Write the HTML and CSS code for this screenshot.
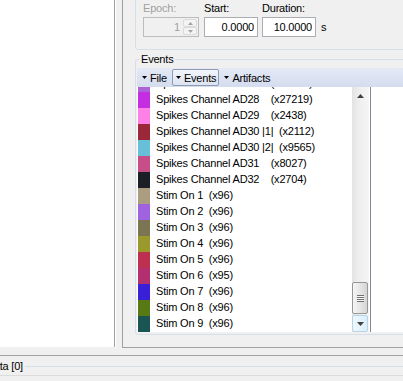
FILE: index.html
```html
<!DOCTYPE html>
<html lang="en">

<head>
    <meta charset="UTF-8">
    <meta name="viewport" content="width=device-width, initial-scale=1.0">
    <title>Events</title>
    <link rel="stylesheet" href="styles.css">
</head>

<body>
    <div class="workspace">
        <!-- Plot area (left) -->
        <div class="left-pane"></div>
        <div class="splitter"></div>

        <!-- Side panel -->
        <div class="right-pane">
            <div class="epoch-box">
                <div class="field epoch">
                    <label class="disabled">Epoch:</label>
                    <div class="spin">
                        <span class="spin-value">1</span>
                        <span class="spin-buttons">
                            <span class="spin-btn"><svg width="5" height="3" viewBox="0 0 5 3"><polygon points="2.5,0 5,3 0,3" fill="#a3a3a3"/></svg></span>
                            <span class="spin-btn"><svg width="5" height="3" viewBox="0 0 5 3"><polygon points="0,0 5,0 2.5,3" fill="#a3a3a3"/></svg></span>
                        </span>
                    </div>
                </div>
                <div class="field start">
                    <label>Start:</label>
                    <input class="num" type="text" value="0.0000" readonly>
                </div>
                <div class="field duration">
                    <label>Duration:</label>
                    <div class="with-unit">
                        <input class="num" type="text" value="10.0000" readonly>
                        <span class="unit">s</span>
                    </div>
                </div>
            </div>

            <fieldset class="events-box">
                <legend>Events</legend>
                <div class="toolbar">
                    <span class="tb-item file"><svg class="drop" width="5" height="3" viewBox="0 0 5 3"><polygon points="0,0 5,0 2.5,3"/></svg>File</span>
                    <span class="tb-item events checked"><svg class="drop" width="5" height="3" viewBox="0 0 5 3"><polygon points="0,0 5,0 2.5,3"/></svg>Events</span>
                    <span class="tb-item artifacts"><svg class="drop" width="5" height="3" viewBox="0 0 5 3"><polygon points="0,0 5,0 2.5,3"/></svg>Artifacts</span>
                </div>
                <div class="list-area">
                    <div class="rows">
                        <div class="rows-inner">
                            <div class="row"><span class="swatch" style="background:#ad62d6"></span><span class="label">Spikes Channel AD27    (x26318)</span></div>
                            <div class="row"><span class="swatch" style="background:#c42de0"></span><span class="label">Spikes Channel AD28    (x27219)</span></div>
                            <div class="row"><span class="swatch" style="background:#ff80e6"></span><span class="label">Spikes Channel AD29    (x2438)</span></div>
                            <div class="row"><span class="swatch" style="background:#9a2838"></span><span class="label">Spikes Channel AD30 |1|  (x2112)</span></div>
                            <div class="row"><span class="swatch" style="background:#66c0d8"></span><span class="label">Spikes Channel AD30 |2|  (x9565)</span></div>
                            <div class="row"><span class="swatch" style="background:#c84e88"></span><span class="label">Spikes Channel AD31    (x8027)</span></div>
                            <div class="row"><span class="swatch" style="background:#1b1f26"></span><span class="label">Spikes Channel AD32    (x2704)</span></div>
                            <div class="row"><span class="swatch" style="background:#ab9d7f"></span><span class="label">Stim On 1  (x96)</span></div>
                            <div class="row"><span class="swatch" style="background:#a063e0"></span><span class="label">Stim On 2  (x96)</span></div>
                            <div class="row"><span class="swatch" style="background:#7b7553"></span><span class="label">Stim On 3  (x96)</span></div>
                            <div class="row"><span class="swatch" style="background:#999a2b"></span><span class="label">Stim On 4  (x96)</span></div>
                            <div class="row"><span class="swatch" style="background:#bd3050"></span><span class="label">Stim On 5  (x96)</span></div>
                            <div class="row"><span class="swatch" style="background:#b32f6f"></span><span class="label">Stim On 6  (x95)</span></div>
                            <div class="row"><span class="swatch" style="background:#3a1fd9"></span><span class="label">Stim On 7  (x96)</span></div>
                            <div class="row"><span class="swatch" style="background:#587a14"></span><span class="label">Stim On 8  (x96)</span></div>
                            <div class="row"><span class="swatch" style="background:#1b5553"></span><span class="label">Stim On 9  (x96)</span></div>
                        </div>
                    </div>
                    <div class="scrollbar">
                        <div class="sb-btn up"><svg width="7" height="4" viewBox="0 0 7 4"><polygon points="3.5,0 7,4 0,4" fill="#404040"/></svg></div>
                        <div class="sb-track">
                            <div class="sb-thumb"><span class="grip"></span></div>
                        </div>
                        <div class="sb-btn down"><svg width="7" height="4" viewBox="0 0 7 4"><polygon points="0,0 7,0 3.5,4" fill="#404040"/></svg></div>
                    </div>
                    <div class="list-divider"></div>
                    <div class="list-rest"></div>
                </div>
            </fieldset>
        </div>
    </div>

    <!-- Data panel (bottom) -->
    <div class="status">
        <fieldset class="data-box">
            <legend>Data [0]</legend>
            <div class="data-grid"></div>
        </fieldset>
    </div>
</body>

</html>
```

FILE: styles.css
```css
/* Basic Reset */
* {
    margin: 0;
    padding: 0;
    box-sizing: border-box;
}

body {
    font-family: "Liberation Sans", Arial, sans-serif;
    font-size: 11px;
    letter-spacing: -0.2px;
    color: #000;
    background-color: #f0f0f0;
    width: 403px;
    height: 381px;
    overflow: hidden;
}

/* Main split layout */
.workspace {
    display: flex;
    height: 348px;
}

.left-pane {
    flex: none;
    width: 115px;
    height: 347px;
    background-color: #fff;
    border-right: 1px solid #a0a0a0;
}

.splitter {
    flex: none;
    width: 7px;
    border-left: 1px solid #fff;
}

.right-pane {
    flex: none;
    width: 300px;
    height: 348px;
    border-left: 1px solid #a0a0a0;
    border-bottom: 1px solid #a0a0a0;
}

/* Epoch / start / duration group */
.epoch-box {
    display: flex;
    align-items: flex-start;
    width: 300px;
    margin: -5px 0 0 12px;
    padding: 6px 0 12px 7px;
    border: 1px solid #d5dfe5;
    border-radius: 3px;
}

.field {
    display: flex;
    flex-direction: column;
}

.field label {
    line-height: 13px;
    margin-bottom: 2px;
}

.field label.disabled {
    color: #a0a0a0;
}

.field.epoch {
    width: 56px;
    margin-right: 5px;
}

.field.start {
    margin-right: 4px;
}

.spin {
    display: flex;
    height: 20px;
    border: 1px solid #bcbcbc;
    background-color: #f0f0f0;
}

.spin-value {
    flex: 1;
    text-align: right;
    padding-right: 3px;
    line-height: 18px;
    color: #a0a0a0;
}

.spin-buttons {
    width: 15px;
    display: flex;
    flex-direction: column;
    padding: 1px 1px 1px 0;
}

.spin-btn {
    flex: 1;
    display: flex;
    align-items: center;
    justify-content: center;
    border: 1px solid #dadada;
    border-radius: 2px;
    background-color: #f4f4f4;
}

input.num {
    width: 54px;
    height: 20px;
    border: 1px solid #abadb3;
    background-color: #fff;
    font: inherit;
    letter-spacing: inherit;
    color: #000;
    text-align: right;
    padding: 0 3px;
    outline: none;
}

.with-unit {
    display: flex;
    align-items: center;
}

.unit {
    margin-left: 5px;
}

/* Events group */
.events-box {
    width: 300px;
    margin: 3px 0 0 12px;
    padding: 2px 1px 2px 1px;
    border: 1px solid #d5dfe5;
    border-radius: 3px;
}

.events-box legend,
.data-box legend {
    margin-left: 2px;
    padding: 0 2px;
    line-height: 13px;
}

.toolbar {
    display: flex;
    align-items: center;
    height: 19px;
    padding-left: 1px;
    background: linear-gradient(to bottom, #e4e9f5, #d4dcef);
}

.tb-item {
    display: flex;
    align-items: center;
    gap: 3px;
    height: 17px;
    padding: 0 4px;
}

.tb-item .drop {
    fill: #000;
}

.tb-item.events {
    margin-left: 1px;
    padding: 0 2px 0 3px;
    border: 1px solid #8f9bb0;
    border-radius: 2px;
    background: linear-gradient(to bottom, #f2f5fb, #dce3f1);
}

.tb-item.artifacts {
    padding-left: 5px;
}

/* Event list */
.list-area {
    display: flex;
    height: 245px;
    background-color: #fff;
}

.rows {
    flex: none;
    width: 215px;
    overflow: hidden;
}

.rows-inner {
    margin-top: -11px;
}

.row {
    display: flex;
    align-items: flex-start;
    height: 16px;
    padding-left: 1px;
}

.swatch {
    flex: none;
    width: 12px;
    height: 16px;
    margin-right: 6px;
}

.label {
    white-space: pre;
    line-height: 15px;
}

.scrollbar {
    flex: none;
    width: 17px;
    display: flex;
    flex-direction: column;
    background: linear-gradient(to right, #e3e3e3, #eeeeee 40%, #f5f5f5);
}

.sb-btn {
    height: 17px;
    margin-right: 1px;
    display: flex;
    align-items: center;
    justify-content: center;
}

.sb-btn.down {
    border: 1px solid #b9d3e6;
    border-radius: 2px;
    background: linear-gradient(to right, #eef7fd, #dceffb);
}

.sb-track {
    flex: 1;
    display: flex;
    flex-direction: column;
    justify-content: flex-end;
    padding-bottom: 1px;
}

.sb-thumb {
    height: 32px;
    margin-right: 1px;
    border: 1px solid #979797;
    border-radius: 2px;
    background: linear-gradient(to right, #f5f5f5, #e6e6e6 50%, #d5d5d5);
    display: flex;
    align-items: center;
    justify-content: center;
}

.grip {
    width: 7px;
    height: 7px;
    background: repeating-linear-gradient(to bottom, #707070 0 1px, #f7f7f7 1px 2px);
}

.list-divider {
    flex: none;
    width: 2px;
    border-right: 1px solid #828790;
}

.list-rest {
    flex: 1;
}

/* Bottom data panel */
.status {
    margin-top: 7px;
    border-top: 1px solid #a0a0a0;
}

.data-box {
    width: 440px;
    margin: 4px 0 0 -20px;
    padding: 2px 1px 0 1px;
    border: 1px solid #d5dfe5;
    border-radius: 3px;
}

.data-grid {
    height: 20px;
    border-top: 1px solid #dcdcdc;
}
```
